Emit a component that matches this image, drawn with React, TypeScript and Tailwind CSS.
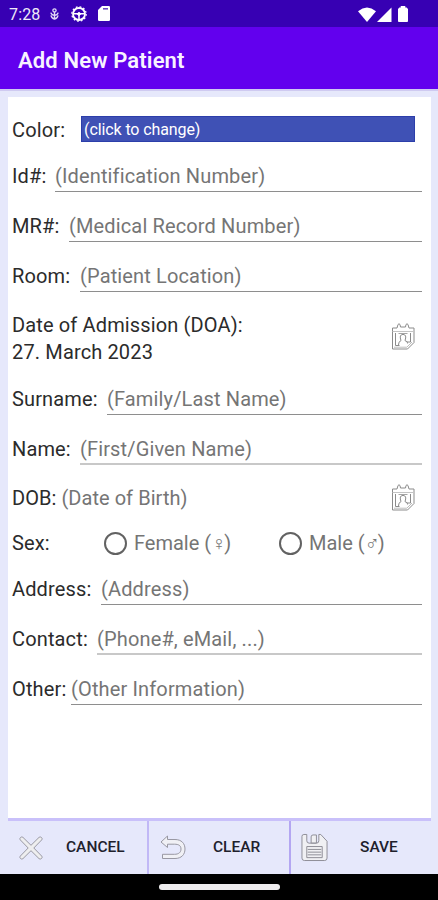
import type { ReactNode } from "react"
import clsx from "clsx"

type FieldProps = {
  label: string
  hint: string
  labelClass: string
  soft?: boolean
}

function Field({ label, hint, labelClass, soft }: FieldProps) {
  return (
    <div className="flex h-[50px] pl-1 pr-[9px]">
      <span className={clsx("shrink-0 whitespace-nowrap pt-[21px]", labelClass)}>{label}</span>
      <div
        className={clsx(
          "flex-1 whitespace-nowrap pt-[21px] text-[#757575]",
          soft ? "border-b-2 border-[#c8c8c8]" : "border-b-[1.5px] border-[#8e8e8e]",
        )}
      >
        {hint}
      </div>
    </div>
  )
}

function CalendarIcon() {
  return (
    <svg aria-hidden width="26" height="30" viewBox="0 0 26 30" fill="none" stroke="#8b8b8b" strokeWidth="1">
      <path d="M2.5 6H7L8 2.5Q9 1 10 2.5L10.5 5H15.5L16 2.5Q17 1 18 2.5L19 6H24V20.5L17.5 27H2.5Z" />
      <path d="M2.5 9.5H24" stroke="#c4c4c4" />
      <path d="M5.5 11V23.5H9.5M20.5 11V20H17" />
      <path d="M8.5 11.5H17.5" stroke="#a5a5a5" />
      <path d="M8.5 23Q8.3 19.6 11 18.6Q8.8 12.6 13 12.4Q17.2 12.6 15 18.6Q17.8 19.4 17.6 21.5" />
      <path d="M4 25.2H16.8L22 20" stroke="#bdbdbd" />
    </svg>
  )
}

function CloseIcon() {
  return (
    <svg aria-hidden width="24" height="24" viewBox="0 0 24 24" fill="#eeeeef" stroke="#9998a3" strokeWidth="1">
      <path d="M1.2 3.8Q.4 2.5 1.5 1.5Q2.6.5 3.9 1.3L12 9.3L20.1 1.3Q21.4.5 22.5 1.5Q23.6 2.5 22.8 3.8L14.8 12L22.8 20.2Q23.6 21.5 22.5 22.5Q21.4 23.5 20.1 22.7L12 14.7L3.9 22.7Q2.6 23.5 1.5 22.5Q.4 21.5 1.2 20.2L9.2 12Z" />
    </svg>
  )
}

function UndoIcon() {
  return (
    <svg aria-hidden width="26" height="25" viewBox="0 0 26 25" fill="#f0f0f5" stroke="#9998a3" strokeWidth="1" strokeLinejoin="round">
      <path d="M1 7L7.5 1V4.5H15C21.5 4.5 25 8.5 25 14S21.5 23.5 15 23.5H2.5V19.3H14.5C18.5 19.3 21 17.5 21 14S18.5 9.2 14.5 9.2H7.5V12.5Z" />
    </svg>
  )
}

function SaveIcon() {
  return (
    <svg aria-hidden width="27" height="29" viewBox="0 0 28 29" fill="#f0f0f3" stroke="#8c8b95" strokeWidth="1">
      <path d="M1 3Q1 1 3 1H6V7.5Q6 10 8.5 10H16Q18.5 10 18.5 7.5V1H20.5L27 8V25.5Q27 28 24.5 28H3.5Q1 28 1 25.5Z" />
      <path d="M10.5 3.5Q10.5 1.5 12.5 1.5H16V9.8H10.5Z" />
      <path d="M6 13.5H22V25H6Z" />
      <path d="M7 16.5H21M7 19.3H21M7 22.1H21" />
    </svg>
  )
}

function StatusBar() {
  return (
    <div className="flex h-[27px] items-center justify-between bg-[#3700b3] pl-[9px] pr-[30px] text-white">
      <div className="flex items-center">
        <span className="w-[41px] pt-[2px] text-[16px] leading-none text-[#eeeaf8]">7:28</span>
        <svg aria-hidden className="mt-px w-[9px]" height="12" viewBox="0 0 9 12" fill="none" stroke="#e2daf5" strokeWidth="1.3">
          <circle cx="4.5" cy="2.4" r="1.6" />
          <path d="M4.5 4V11M.8 4.6Q1.5 7 4.5 7.4Q7.5 7 8.2 4.6M1 7.4Q1.5 10.5 4.5 11Q7.5 10.5 8 7.4" />
        </svg>
        <svg aria-hidden className="ml-[12px]" width="16" height="16" viewBox="0 0 16 16" fill="none" stroke="#fff">
          <circle cx="8" cy="8" r="6" strokeWidth="1.8" />
          <circle cx="8" cy="8" r="7.2" strokeWidth="1.2" strokeDasharray="1.8 2" />
          <path d="M2 7.8H14M8 8V14" strokeWidth="1.6" />
          <circle cx="8" cy="8" r="1.4" fill="#fff" />
        </svg>
        <svg aria-hidden className="ml-[11px]" width="12" height="15" viewBox="0 0 12 15" fill="#fff">
          <path d="M4 0H10.8Q12 0 12 1.2V13.8Q12 15 10.8 15H1.2Q0 15 0 13.8V4Z" />
          <path d="M5 2H10V3.6H5Z" fill="#6f4ac4" />
        </svg>
      </div>
      <div className="flex items-end gap-[1px]">
        <svg aria-hidden width="18" height="15" viewBox="0 0 18 15" fill="#fff">
          <path d="M0 4.2Q9-3.2 18 4.2L9 15Z" />
        </svg>
        <svg aria-hidden width="15" height="15" viewBox="0 0 15 15" fill="#fff">
          <path d="M0 15L14.5 .5V15Z" />
        </svg>
        <svg aria-hidden className="ml-[5px]" width="10" height="16" viewBox="0 0 11 16" fill="#fff" preserveAspectRatio="none">
          <path d="M3 0H8V1.6H9.5L11 3V15Q11 16 10 16H1Q0 16 0 15V3L1.5 1.6H3Z" />
        </svg>
      </div>
    </div>
  )
}

function Radio({ children, className }: { children: ReactNode; className?: string }) {
  return (
    <div className={clsx("flex items-center whitespace-nowrap text-[#757575]", className)}>
      <span className="mr-[7px] size-[23px] shrink-0 rounded-full border-2 border-[#626262]" />
      {children}
    </div>
  )
}

type ActionProps = {
  icon: ReactNode
  label: string
  className: string
  textClass: string
}

function Action({ icon, label, className, textClass }: ActionProps) {
  return (
    <button className={clsx("flex items-center", className)}>
      {icon}
      <span className={clsx("pt-px text-[15.5px] font-medium leading-none text-[#20202b]", textClass)}>{label}</span>
    </button>
  )
}

export default function App() {
  return (
    <div className="flex h-[900px] w-[438px] flex-col overflow-hidden bg-[#e6e8fb] font-['Roboto',sans-serif] text-[20px] leading-[27px] tracking-[0.14px] text-[#2b2b2b]">
      <StatusBar />
      <header className="flex h-[62px] shrink-0 items-center bg-[#6200ee] pl-[18px] pt-[4px]">
        <h1 className="text-[22px] font-semibold text-[#f8f3ff]">Add New Patient</h1>
      </header>
      <div className="h-[2px] shrink-0 bg-[#cfcaf1]" />

      <main className="ml-[8px] mr-[7px] mt-[6px] h-[721px] shrink-0 bg-white">
        <div className="flex pl-1 pr-[16px] pt-[19px]">
          <span className="w-[69px] pt-px">Color:</span>
          <div className="h-[26px] flex-1 border border-[#2c3eaa] bg-[#3f51b5] pl-[2px] text-[16px] leading-[26px] tracking-[-0.1px] text-white">
            (click to change)
          </div>
        </div>
        <div className="-mt-[2px]">
          <Field label="Id#:" hint="(Identification Number)" labelClass="w-[43px]" />
          <Field label="MR#:" hint="(Medical Record Number)" labelClass="w-[57px]" />
          <Field label="Room:" hint="(Patient Location)" labelClass="w-[68px]" />
        </div>

        <div className="flex h-[73px] items-center justify-between pl-1 pr-[15px]">
          <div className="pt-[21px]">
            <p>Date of Admission (DOA):</p>
            <p>27. March 2023</p>
          </div>
          <div className="pt-[17px]">
            <CalendarIcon />
          </div>
        </div>

        <Field label="Surname:" hint="(Family/Last Name)" labelClass="w-[95px]" />
        <Field label="Name:" hint="(First/Given Name)" labelClass="w-[68px]" soft />

        <div className="flex h-[66px] items-center justify-between pl-1 pr-[15px]">
          <p className="tracking-[0.05px]">
            DOB: <span className="text-[#757575]">(Date of Birth)</span>
          </p>
          <CalendarIcon />
        </div>

        <div className="flex h-[24px] items-center pl-1">
          <span className="w-[92px]">Sex:</span>
          <Radio className="w-[175px]">
            <span className="tracking-[0px]">
              Female (<span className="text-[20px] leading-none tracking-[-3px]">♀</span>
              <span className="ml-px">)</span>
            </span>
          </Radio>
          <Radio>
            <span className="tracking-[0px]">
              Male (<span className="text-[20px] leading-none tracking-[-3px]">♂</span>
              <span className="ml-px">)</span>
            </span>
          </Radio>
        </div>

        <Field label="Address:" hint="(Address)" labelClass="w-[89px]" />
        <Field label="Contact:" hint="(Phone#, eMail, ...)" labelClass="w-[85px]" soft />
        <Field label="Other:" hint="(Other Information)" labelClass="w-[59px]" />
      </main>

      <footer className="ml-[8px] mr-[7px] flex h-[56px] shrink-0 border-t-[3px] border-[#c9c0fa] tracking-[0px]">
        <Action icon={<CloseIcon />} label="CANCEL" className="w-[139px] pl-[11px]" textClass="ml-[23px]" />
        <Action
          icon={<UndoIcon />}
          label="CLEAR"
          className="w-[142px] border-l-2 border-[#c1b8f6] pl-[11px]"
          textClass="ml-[27px]"
        />
        <Action
          icon={<SaveIcon />}
          label="SAVE"
          className="flex-1 border-l-2 border-[#b3a6f2] pl-[10px]"
          textClass="ml-[32px]"
        />
      </footer>

      <div className="flex flex-1 justify-center bg-black pt-[10px]">
        <div className="h-[6px] w-[121px] rounded-full bg-[#efedef]" />
      </div>
    </div>
  )
}
